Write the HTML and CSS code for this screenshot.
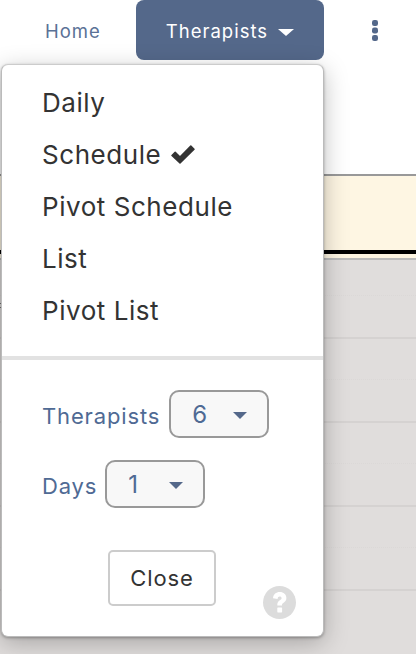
FILE: index.html
```html
<!DOCTYPE html>
<html lang="en">
<head>
    <meta charset="UTF-8">
    <meta name="viewport" content="width=device-width, initial-scale=1.0">
    <title>Therapists</title>
    <link rel="stylesheet" href="styles.css">
</head>
<body>
    <nav class="navbar">
        <a class="nav-link">Home</a>
        <a class="nav-link active">Therapists <span class="caret caret-white"></span></a>
        <a class="nav-more">
            <svg width="6" height="21" viewBox="0 0 6 21"><rect x="0" y="0" width="6" height="6" rx="2.2"/><rect x="0" y="7.5" width="6" height="6" rx="2.2"/><rect x="0" y="15" width="6" height="6" rx="2.2"/></svg>
        </a>
    </nav>

    <div class="spacer"></div>
    <div class="notice">
        <div class="notice-line"></div>
    </div>
    <div class="grid">
        <div class="grid-row first"><span class="tick"></span><div class="half"></div></div>
        <div class="grid-row"><div class="half"></div></div>
        <div class="grid-row"><div class="half"></div></div>
        <div class="grid-row"><div class="half"></div></div>
    </div>

    <div class="menu">
        <ul class="menu-list">
            <li>Daily</li>
            <li>Schedule
                <svg class="check" width="24" height="19" viewBox="0 0 24 19"><path d="M1 10.5 L4.2 7.2 L9 12 L19.8 1 L23 4.3 L9 18 Z"/></svg>
            </li>
            <li>Pivot Schedule</li>
            <li>List</li>
            <li>Pivot List</li>
        </ul>
        <div class="menu-options">
            <div class="option">
                <label>Therapists</label>
                <div class="picker"><span>6</span><span class="caret caret-blue"></span></div>
            </div>
            <div class="option">
                <label>Days</label>
                <div class="picker"><span>1</span><span class="caret caret-blue"></span></div>
            </div>
        </div>
        <div class="menu-footer">
            <button type="button">Close</button>
        </div>
        <svg class="help" width="33" height="33" viewBox="0 0 33 33">
            <circle cx="16.5" cy="16.5" r="16.5" fill="#dcdcdc"/>
            <path d="M10 12.3 C10.4 8.2 13 6 16.8 6 C20.6 6 23.4 8.5 23.4 12 C23.4 14.6 22 15.8 20.3 16.9 C19.2 17.6 19 18.1 19 19.6 L14.3 19.6 C14.2 17 14.8 15.6 16.8 14.3 C18 13.5 18.6 13.1 18.6 12.2 C18.6 11.2 17.8 10.5 16.7 10.5 C15.5 10.5 14.8 11.3 14.6 12.9 Z" fill="#fff"/>
            <rect x="14.3" y="21.4" width="4.8" height="5" rx="0.6" fill="#fff"/>
        </svg>
    </div>
</body>
</html>
```

FILE: styles.css
```css
* {
    box-sizing: border-box;
}
html, body {
    height: 100%;
}
body {
    margin: 0;
    overflow: hidden;
    position: relative;
    font-family: Inter, "Noto Sans", sans-serif;
    background-color: #e0dddc;
}
.navbar {
    display: flex;
    align-items: flex-start;
    height: 60px;
    background: white;
}
.nav-link {
    font-size: 18.5px;
    letter-spacing: 1px;
    line-height: 62px;
    color: #5a7196;
    margin-left: 45px;
}
.nav-link.active {
    flex: none;
    width: 188px;
    height: 60px;
    margin-left: 35px;
    padding-left: 30px;
    color: white;
    background-color: #54688a;
    border-radius: 8px;
}
.nav-more {
    display: flex;
    margin: 20px 0 0 48px;
}
.nav-more svg {
    fill: #54688a;
}
.caret {
    display: inline-block;
    width: 0;
    height: 0;
    border-style: solid;
    border-width: 7px 7.5px 0 7.5px;
    border-color: transparent;
}
.caret-white {
    border-width: 7px 8px 0 8px;
    border-top-color: white;
    margin-left: 4px;
    vertical-align: 2px;
}
.caret-blue {
    border-top-color: #54688a;
}
.spacer {
    height: 114px;
    background: white;
}
.notice {
    height: 84px;
    background-color: #fef6e3;
    border-top: 2px solid #999;
}
.notice-line {
    height: 4px;
    margin-top: 74px;
    background: black;
}
.grid-row {
    display: flex;
    flex-direction: column;
    justify-content: flex-end;
    height: 84px;
    border-bottom: 2px solid #d5d2d1;
}
.grid-row.first {
    height: 81px;
    border-top: 2px solid #bbb;
}
.half {
    margin-bottom: 41px;
    border-bottom: 1px dotted #dbd8d7;
}
.tick {
    display: block;
    width: 2px;
    height: 5px;
    margin-bottom: -13px;
    border-top: 1px solid #777;
    border-bottom: 1px solid #777;
}
.menu {
    position: absolute;
    top: 64px;
    left: 1px;
    width: 323px;
    height: 573px;
    background: white;
    border: 1px solid #bbb;
    border-top-color: #ccc;
    border-radius: 7px;
    box-shadow: 0 1px 3px rgba(0,0,0,0.3), 0 6px 24px rgba(0,0,0,0.25);
}
.menu-list {
    list-style: none;
    margin: 0;
    padding: 11px 0 20px 0;
    border-bottom: 4px solid #e2e2e2;
}
.menu-list li {
    display: flex;
    align-items: center;
    gap: 10px;
    height: 52px;
    padding-left: 40px;
    font-size: 26px;
    letter-spacing: 0.55px;
    color: #333;
}
.check {
    fill: #333;
    stroke: #333;
    stroke-width: 1.5;
    stroke-linejoin: round;
}
.menu-options {
    padding: 30px 0 0 40px;
}
.option {
    display: flex;
    align-items: center;
    gap: 9px;
    height: 48px;
    margin-bottom: 22px;
}
.option:last-child {
    gap: 8px;
}
.option label {
    font-size: 22px;
    letter-spacing: 0.85px;
    color: #4f6a94;
    padding-top: 4px;
}
.picker {
    display: flex;
    align-items: center;
    justify-content: space-between;
    width: 100px;
    height: 48px;
    padding: 0 20px 0 21px;
    font-size: 24px;
    color: #4f6a94;
    background-color: #f8f8f8;
    border: 2px solid #999;
    border-radius: 10px;
}
.picker .caret {
    margin-top: 3px;
}
.menu-footer {
    display: flex;
    justify-content: center;
    padding: 20px 0 0 0;
}
button {
    width: 108px;
    height: 56px;
    margin-right: 1px;
    font-family: inherit;
    font-size: 22px;
    letter-spacing: 0.9px;
    color: #333;
    background: white;
    border: 2px solid #ccc;
    border-radius: 5px;
}
.help {
    position: absolute;
    right: 27px;
    bottom: 17px;
}
```
